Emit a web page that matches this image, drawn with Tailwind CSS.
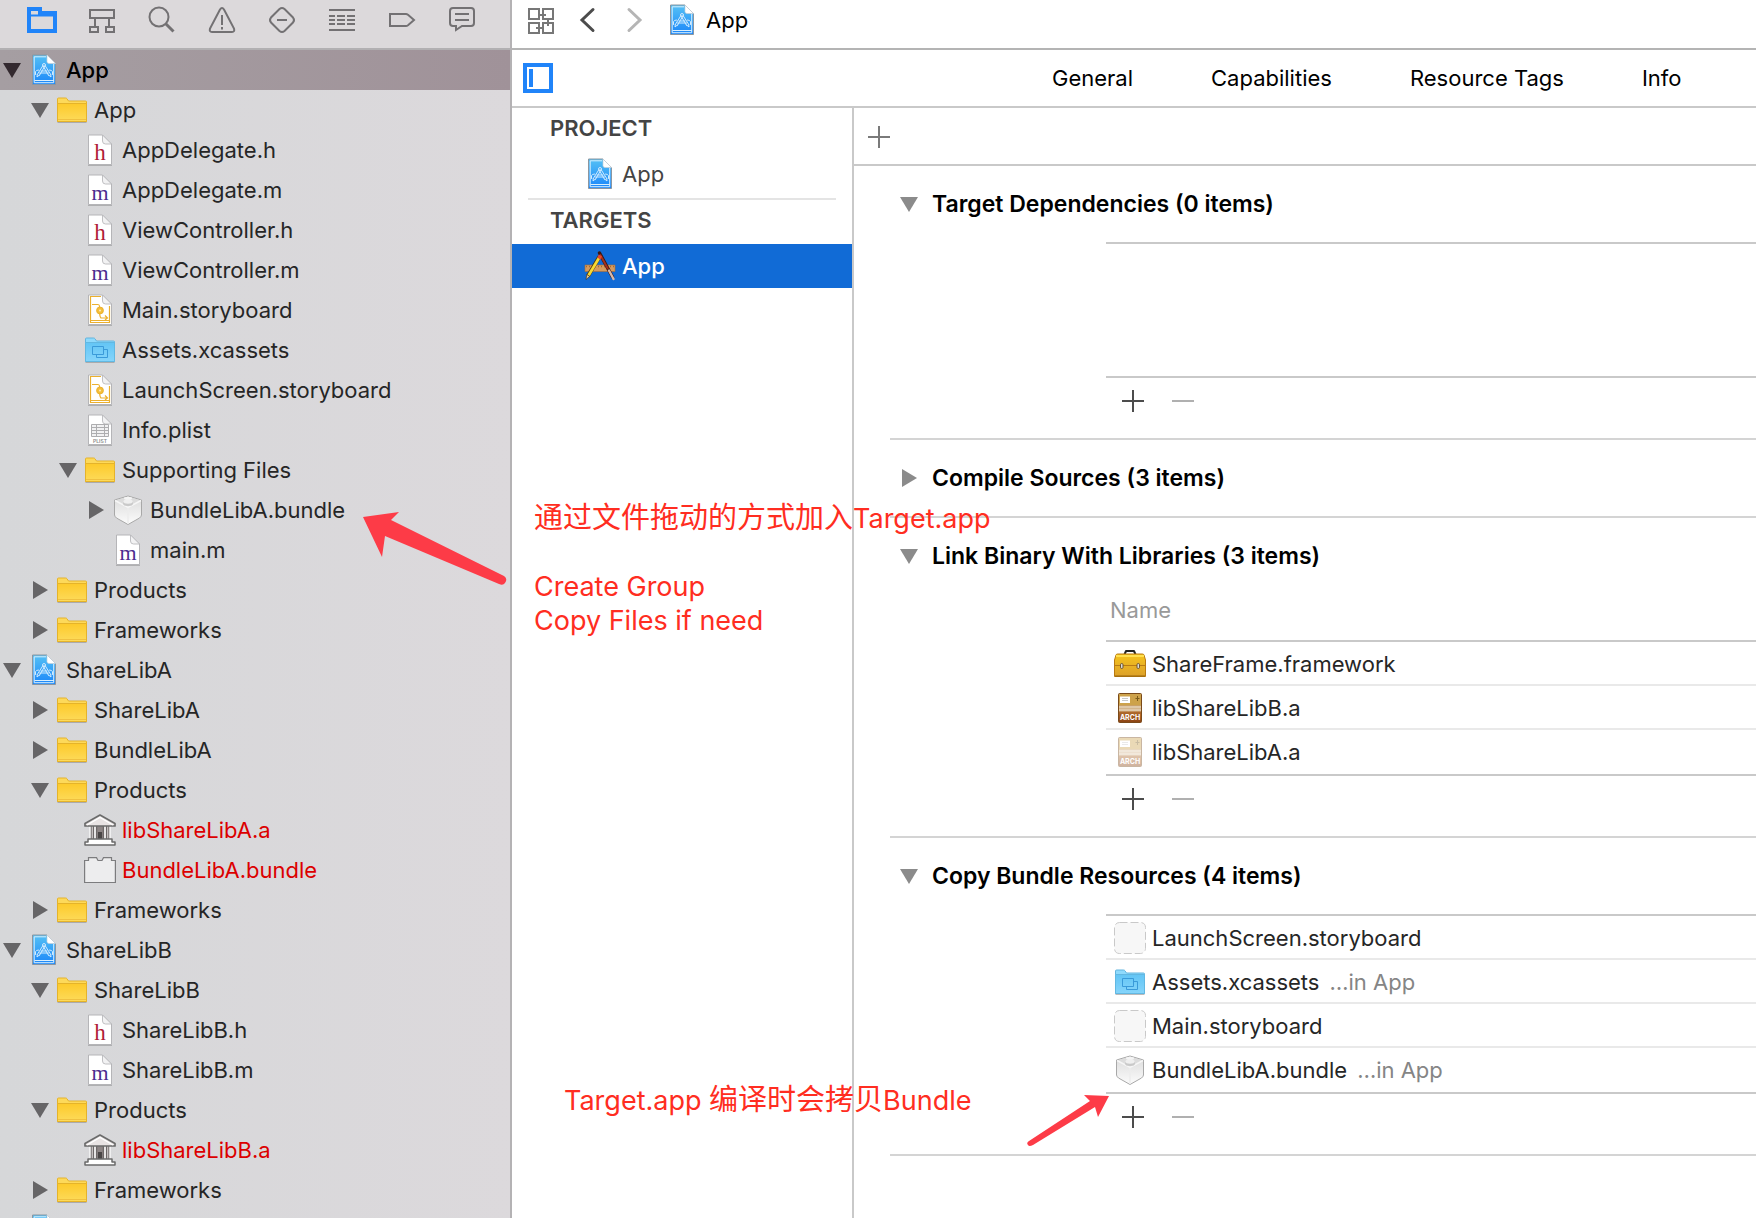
<!DOCTYPE html>
<html lang="zh-CN">
<head>
<meta charset="utf-8">
<meta name="viewport" content="width=device-width, initial-scale=1">
<title>App — Build Phases</title>
<script src="https://cdn.jsdelivr.net/npm/@tailwindcss/browser@4"></script>
</head>
<body class="relative flex h-screen overflow-hidden bg-white font-['Inter','Noto_Sans_CJK_SC',sans-serif] text-[22px] leading-[30px] text-[#262626]">

<svg class="absolute size-0" aria-hidden="true">
  <defs>
    <linearGradient id="gBlue" x1="0" y1="0" x2="0" y2="1"><stop offset="0" stop-color="#55c1f5"/><stop offset="1" stop-color="#1b86f9"/></linearGradient>
    <linearGradient id="gFolder" x1="0" y1="0" x2="0" y2="1"><stop offset="0" stop-color="#fdca2b"/><stop offset="1" stop-color="#fddb5b"/></linearGradient>
    <linearGradient id="gAsset" x1="0" y1="0" x2="0" y2="1"><stop offset="0" stop-color="#63c5f5"/><stop offset="1" stop-color="#86d5fb"/></linearGradient>
    <linearGradient id="gCube" x1="0" y1="0" x2="0" y2="1"><stop offset="0" stop-color="#dadada"/><stop offset="1" stop-color="#fcfcfc"/></linearGradient>
    <linearGradient id="gBox" x1="0" y1="0" x2="0" y2="1"><stop offset="0" stop-color="#f6c41c"/><stop offset="1" stop-color="#dca02a"/></linearGradient>
    <linearGradient id="gArch" x1="0" y1="0" x2="0" y2="1"><stop offset="0" stop-color="#c08a45"/><stop offset=".6" stop-color="#b36f30"/><stop offset="1" stop-color="#8a4212"/></linearGradient>
  </defs>

  <symbol id="down" viewBox="0 0 24 24"><path d="M3 5h18l-9 15z" fill="currentColor"/></symbol>
  <symbol id="right" viewBox="0 0 24 24"><path d="M5 3v18l15-9z" fill="currentColor"/></symbol>
  <symbol id="plus" viewBox="0 0 22 22"><path d="M0 11h22M11 0v22" stroke="currentColor" stroke-width="2" fill="none"/></symbol>
  <symbol id="minus" viewBox="0 0 22 22"><path d="M0 11h22" stroke="currentColor" stroke-width="2" fill="none"/></symbol>

  <symbol id="project" viewBox="0 0 32 32">
    <path d="M4.500 1h14.500l8.500 8.500v21H4.500z" fill="url(#gBlue)" stroke="#8b96a0" stroke-width="1"/>
    <path d="M18 2.800H6.200v25.900h19.500V10" fill="none" stroke="#d9effd" stroke-width="1"/>
    <path d="M6.500 26.500h19.500" stroke="#d9effd" stroke-width="1"/>
    <path d="M19 1l8.500 8.500H21q-2 0-2-2z" fill="#fff" stroke="#c6d0d8" stroke-width=".7"/>
    <path d="M15 11.500L9.300 20.500M16.600 12.500l-5.200 9M9.300 20.500L9 23l2.400-2M17 11.500l5.700 9M15.400 12.500l5.200 9M22.700 20.500L23 23l-2.400-2M13 17h6M11.500 19h9M7.500 20.500v-3q1-1.500 3-1.500M24.500 20.500v-3q-1-1.500-3-1.500" fill="none" stroke="#cfeaff" stroke-width="1" stroke-linecap="round"/>
    <circle cx="16" cy="11" r="1.500" fill="none" stroke="#cfeaff"/>
  </symbol>
  <symbol id="folder" viewBox="0 0 32 32">
    <path d="M1.500 28.500h29" stroke="#8d8d8d" stroke-opacity=".6"/>
    <path d="M1.500 27.500V5q0-1 1-1h7q1 0 1.500.8L12.500 7h17q1 0 1 1v19.500z" fill="#fdd95a" stroke="#e5b32a"/>
    <path d="M1.500 9.500h29v18h-29z" fill="url(#gFolder)" stroke="#e5b32a"/>
    <path d="M2 25.500h28" stroke="#f0c040"/>
  </symbol>
  <symbol id="assets" viewBox="0 0 32 32">
    <path d="M1.500 28.500h29" stroke="#8d8d8d" stroke-opacity=".6"/>
    <path d="M1.500 27.500V5q0-1 1-1h7q1 0 1.500.8L12.500 7h17q1 0 1 1v19.500z" fill="#8fdafc" stroke="#62b4de"/>
    <path d="M1.500 8.500h29v19h-29z" fill="url(#gAsset)" stroke="#62b8e2"/>
    <path d="M8.500 12.500h11v8h-11zM19.500 15.500h4v8h-11v-3" fill="none" stroke="#3a9ad9"/>
  </symbol>
  <symbol id="page" viewBox="0 0 32 32">
    <path d="M4 31.200h24" stroke="#777" stroke-opacity=".6"/>
    <path d="M4.500 1h14l9 9v20.500h-23z" fill="#fff" stroke="#b5b5b8"/>
    <path d="M18.500 1l9 9h-6q-3 0-3-3z" fill="#f2f2f3" stroke="#b9b9bc" stroke-width=".9"/>
  </symbol>
  <symbol id="story" viewBox="0 0 32 32"><use href="#page"/>
    <path d="M17 2.500H6.500v26h19V12M6.500 26.500h19" fill="none" stroke="#ebb02f" stroke-width="1.200"/>
    <path d="M8 10.500h6q1.500 0 1.500 2v4q0 6 1.500 7.500h6M21 21.500l2.500 2.500-2.500 2" fill="none" stroke="#ebb02f" stroke-width="1.200"/>
    <circle cx="16" cy="16.500" r="3.400" fill="#f5bf38" stroke="#ebb02f"/><circle cx="16" cy="16.500" r="1" fill="#fdebc0"/>
  </symbol>
  <symbol id="cube" viewBox="0 0 32 32">
    <path d="M16 2L2.500 6v15q.5 2 2 3L16 30.500 27.500 24q1.500-1 2-3V6z" fill="url(#gCube)" stroke="#a8a8a8"/>
    <path d="M3 6.500L16 2.500l13 4-13 7z" fill="#dcdcdc"/>
    <path d="M3 6.500l13 7 13-7" fill="none" stroke="#f6f6f6" stroke-width="1.500"/>
    <path d="M16 14v16" stroke="#ececec" stroke-width="1.500"/>
    <ellipse cx="16" cy="9.500" rx="5" ry="2.500" fill="#c9c9c9"/><ellipse cx="16" cy="7.500" rx="4.500" ry="2.200" fill="#efefef"/>
    <ellipse cx="16" cy="4.200" rx="4" ry="1.500" fill="#f4f4f4"/>
  </symbol>
  <symbol id="lib" viewBox="0 0 32 32">
    <path d="M6 12h20v13H6z" fill="#d9d3d3"/>
    <path d="M12 12h8v13h-8z" fill="#8d8585"/><path d="M14 18h4v7h-4z" fill="#4a4646"/>
    <path d="M7 12v13M9.500 12v13M12.500 12v13M19.500 12v13M22.500 12v13M25 12v13" stroke="#6d6868" stroke-width="1.400"/>
    <path d="M11 12v13M21 12v13M6 12v13M26 12v13" stroke="#fff" stroke-width="1.200"/>
    <path d="M16 1L1 9.500V12h30V9.500z" fill="#e8e3e3" stroke="#6b6b6b" stroke-width="1.700" stroke-linejoin="round"/>
    <path d="M3 11L16 3.500 29 11" fill="none" stroke="#fff" stroke-width="1.200"/>
    <path d="M4 25h24v3h3v3H1v-3h3z" fill="#fff" stroke="#6b6b6b" stroke-width="1.500" stroke-linejoin="round"/>
  </symbol>
  <symbol id="brick" viewBox="0 0 32 32">
    <path d="M.600 28.500v-22H4.500V3.600h8l1.500 2.900h4l1.500-2.900h8v2.900h3.900v22z" fill="#ededee" stroke="#7c7c7e" stroke-width="1.200"/>
  </symbol>
  <symbol id="toolbox" viewBox="0 0 32 32">
    <path d="M10.500 6.500l1.500-3.500h8l1.500 3.500" fill="none" stroke="#222" stroke-width="2" stroke-linejoin="round"/>
    <path d="M.5 28.500V12l1.500-5q.3-1 1.500-1h25q1.200 0 1.500 1l1.500 5v16.500z" fill="url(#gBox)" stroke="#b87a10"/>
    <path d="M2 8h28" stroke="#ffe04f" stroke-width="2"/><path d="M.5 17.500h31" stroke="#b87a14"/><path d="M1 28h30" stroke="#96650c"/>
    <rect x="6.500" y="15.500" width="2.500" height="5" rx="1.200" fill="#ddd" stroke="#6b5430"/><rect x="23" y="15.500" width="2.500" height="5" rx="1.200" fill="#ddd" stroke="#6b5430"/>
  </symbol>
  <symbol id="box" viewBox="0 0 32 32">
    <rect x="4.500" y="1.500" width="23" height="29" rx="1" fill="url(#gArch)" stroke="#7a4a1a"/>
    <path d="M5 2h22v11.500H5z" fill="#cda24b"/><path d="M5 13.500h22v6H5z" fill="#d3b48c"/><path d="M5 15h22M5 18h22" stroke="#eadbc4"/>
    <path d="M6 4.500h10v6.500H6z" fill="#fff"/><path d="M8 6.500h6M8 8.500h6" stroke="#c9c9c9"/><path d="M23.500 4v5M21.500 6.500h4" stroke="#7a5a1a"/>
  </symbol>
  <symbol id="blank" viewBox="0 0 32 32"><rect x=".5" y=".5" width="31" height="31" rx="5" fill="#f7f7f7" stroke="#c9c9c9" stroke-dasharray="8 3"/></symbol>
  <symbol id="appicon" viewBox="0 0 32 32">
    <path d="M1 15h30v6.500H1z" fill="#d69a5c" stroke="#a86d35" stroke-width=".6"/><path d="M2 16.500h28" stroke="#a06a38" stroke-width="1.500" stroke-dasharray="1 2"/>
    <path d="M15.500 3l13 24" stroke="#3b1512" stroke-width="3.400" stroke-linecap="round"/><path d="M16 4.500l8 14.500" stroke="#a3301c" stroke-width="2"/><path d="M25 20.500l4.500 8.500" stroke="#d9b9a8" stroke-width="2.400" stroke-linecap="round"/>
    <path d="M15.500 6.500L4 26" stroke="#4b3a10" stroke-width="4"/><path d="M15 8L4.500 25.500" stroke="#f8d932" stroke-width="2.800"/><path d="M16.500 5.500l-1.700 3" stroke="#e8452c" stroke-width="3.600"/>
    <path d="M2.800 24.500l3 1.800L2 29.500z" fill="#e8c89a" stroke="#3a2a12" stroke-width=".6"/>
  </symbol>
</svg>

<aside class="flex w-[512px] shrink-0 flex-col border-r-2 border-[#b4b2b4] bg-linear-to-r from-[#d6d7d9] to-[#dcd9dc]">
  <nav class="flex h-[50px] shrink-0 items-start border-b-2 border-[#b2b0b2] bg-[#dcd9db] px-3 pt-1 text-[#737173]" aria-label="Navigators">
    <button class="flex w-15 justify-center text-[#2084f9]" aria-label="Project"><svg class="size-8" viewBox="0 0 32 32" fill="none" stroke="currentColor"><path d="M3 27V5h11v4h15v18z" stroke-width="4"/><path d="M4 11.500h25" stroke-width="2"/></svg></button>
    <button class="flex w-15 justify-center" aria-label="Hierarchy"><svg class="size-8" viewBox="0 0 32 32" fill="none" stroke="currentColor" stroke-width="2"><path d="M4 6h24v8H4zM4 23h8v5H4zM20 23h8v5h-8zM9 14v9M23 14v9"/></svg></button>
    <button class="flex w-15 justify-center" aria-label="Find"><svg class="size-8" viewBox="0 0 32 32" fill="none" stroke="currentColor" stroke-width="2"><circle cx="13" cy="13" r="9.500"/><path d="M19.500 19.500l8 8" stroke-width="3"/></svg></button>
    <button class="flex w-15 justify-center" aria-label="Issues"><svg class="size-8" viewBox="0 0 32 32" fill="none" stroke="currentColor" stroke-width="2"><path d="M14 5.500q2-3 4 0l10 19q1 3.500-2 3.500H6q-3 0-2-3.500zM16 11v10M16 23v2.500"/></svg></button>
    <button class="flex w-15 justify-center" aria-label="Tests"><svg class="size-8" viewBox="0 0 32 32" fill="none" stroke="currentColor" stroke-width="2"><path d="M13.500 5q2.500-2 5 0l8.500 8.500q2 2.500 0 5L18.500 27q-2.500 2-5 0L5 18.500q-2-2.500 0-5zM11 16h10"/></svg></button>
    <button class="flex w-15 justify-center" aria-label="Debug"><svg class="size-8" viewBox="0 0 32 32" fill="none" stroke="currentColor" stroke-width="2"><path d="M3 6h26M3 26h26"/><path d="M3 12h6m2 0h8m2 0h8M3 16h6m2 0h8m2 0h8M3 20h6m2 0h8m2 0h8"/></svg></button>
    <button class="flex w-15 justify-center" aria-label="Breakpoints"><svg class="size-8" viewBox="0 0 32 32" fill="none" stroke="currentColor" stroke-width="2"><path d="M4 10h16q1 0 2 .7L28 16l-6 5.300q-1 .7-2 .7H4z"/></svg></button>
    <button class="flex w-15 justify-center" aria-label="Reports"><svg class="size-8" viewBox="0 0 32 32" fill="none" stroke="currentColor" stroke-width="2"><path d="M7 4h18q3 0 3 3v12q0 3-3 3H16l-6 4v-4H7q-3 0-3-3V7q0-3 3-3zM9 10h14M9 16h14"/></svg></button>
  </nav>
  <ul id="tree" class="min-h-0 flex-1 overflow-hidden"></ul>
</aside>

<main class="flex min-w-0 flex-1 flex-col">
  <header class="flex h-[50px] shrink-0 items-start border-b-2 border-[#b4b4b4] pt-1 pl-[13px]">
    <button aria-label="Related items" class="text-[#777]"><svg class="size-8" viewBox="0 0 32 32" fill="none" stroke="currentColor" stroke-width="2"><path d="M4 5h10v10H4zM18 5h10v10H18zM4 19h10v10H4zM18 19h10v10H18zM14 11h7M23 15v7M18 24h-7"/></svg></button>
    <button aria-label="Back" class="ml-[15px] text-[#4c4c4c]"><svg class="size-8" viewBox="0 0 32 32" fill="none" stroke="currentColor" stroke-width="3" stroke-linecap="round"><path d="M21 5.500L10 16l11 10.500"/></svg></button>
    <button aria-label="Forward" class="ml-[13px] text-[#b5b5b5]"><svg class="size-8" viewBox="0 0 32 32" fill="none" stroke="currentColor" stroke-width="3" stroke-linecap="round"><path d="M12 5.500L23 16 12 26.500"/></svg></button>
    <a href="#" class="ml-[17px] flex items-center gap-2 text-black"><svg class="size-8"><use href="#project"/></svg>App</a>
  </header>

  <div class="flex h-[58px] shrink-0 items-center border-b-2 border-[#c9c9c9] pl-[11px]">
    <button aria-label="Toggle targets list" class="text-[#2084f9]"><svg class="size-[30px]" viewBox="0 0 30 30"><path d="M2 2h26v26H2z" fill="none" stroke="currentColor" stroke-width="4"/><path d="M6 6h4v18H6z" fill="currentColor"/></svg></button>
    <nav class="flex gap-[78px] pl-[499px] text-black" aria-label="Editor tabs">
      <button>General</button>
      <button>Capabilities</button>
      <button class="whitespace-nowrap">Resource Tags</button>
      <button>Info</button>
    </nav>
  </div>

  <div class="flex min-h-0 flex-1">
    <section class="flex w-[342px] shrink-0 flex-col border-r-2 border-[#c9c9c9] text-[#444]">
      <h2 class="flex h-[42px] items-center pb-0.5 pl-[38px] font-semibold">PROJECT</h2>
      <a href="#" class="mx-4 flex h-[50px] items-center gap-1.5 border-b-2 border-[#e4e4e4] pl-14"><svg class="size-8"><use href="#project"/></svg>App</a>
      <h2 class="flex h-11 items-center pb-1 pl-[38px] font-semibold">TARGETS</h2>
      <a href="#" class="flex h-11 items-center gap-1.5 bg-[#116bd6] pl-[72px] font-medium text-white"><svg class="size-8"><use href="#appicon"/></svg>App</a>
    </section>

    <div class="min-w-0 flex-1 overflow-hidden">
      <div class="flex h-[58px] items-center border-b-2 border-[#c9c9c9] pt-0.5 pl-[14px] text-[#7a7a7a]">
        <button aria-label="Add build phase"><svg class="size-[22px]"><use href="#plus"/></svg></button>
      </div>
      <div id="phases" class="pl-9"></div>
    </div>
  </div>
</main>

<!-- Callouts drawn over the window -->
<p class="absolute top-[501px] left-[534px] text-[27px] leading-[34px] whitespace-nowrap text-[#ff2d21]"><span class="text-[29px]">通过文件拖动的方式加入</span>Target.app<br><br>Create Group<br>Copy Files if need</p>
<p class="absolute top-[1083px] left-[564px] text-[27px] leading-[34px] whitespace-nowrap text-[#ff2d21]">Target.app <span class="text-[29px]">编译时会拷贝</span>Bundle</p>
<svg class="absolute top-[510px] left-[360px] h-[76px] w-[150px]" viewBox="0 0 150 76"><path d="M3 7l36-5-8 8 113 56q4 3 1 7-2 3-6 1L25 26l-3 21z" fill="#fd3b47"/></svg>
<svg class="absolute top-[1094px] left-[1024px] h-[54px] w-[88px]" viewBox="0 0 88 54"><path d="M85 2L60 1l6 6L5 47q-3 2-1 4 1 2 5 0l62-38 3 10z" fill="#fd3b47"/></svg>

<script>
  // Icons that carry lettering are drawn on top of a shared base shape
  const lettered = {
    h: '<use href="#page"/><text x="16" y="26" text-anchor="middle" font-family="Liberation Serif, serif" font-size="23" fill="#b01c36">h</text>',
    m: '<use href="#page"/><text x="16" y="26" text-anchor="middle" font-family="Liberation Serif, serif" font-size="22" fill="#4c2c8f">m</text>',
    plist: '<use href="#page"/><path d="M7.500 10.500h17v12h-17zM7.500 13.500h17M7.500 16.500h17M7.500 19.500h17M12.500 10.500v12M20.500 10.500v12" fill="#f1f1f2" stroke="#adadaf"/><text x="16" y="29" text-anchor="middle" font-family="Inter, sans-serif" font-weight="600" font-size="5" fill="#8b8b8b">PLIST</text>',
    arch: '<use href="#box"/><text x="16" y="28" text-anchor="middle" font-family="Inter, sans-serif" font-weight="700" font-size="7" fill="#fff">ARCH</text>',
  };
  const icon = (id) => `<svg class="size-8 shrink-0" viewBox="0 0 32 32" aria-hidden="true">${lettered[id] || `<use href="#${id}"/>`}</svg>`;
  const toggle = (state, cls) => `<button class="${cls}" aria-label="Toggle"><svg class="size-6"><use href="#${state}"/></svg></button>`;

  // depth, disclosure state, icon, label, style
  const tree = [
    [0, 'down', 'project', 'App', 'selected'],
    [1, 'down', 'folder', 'App'],
    [2, '', 'h', 'AppDelegate.h'], [2, '', 'm', 'AppDelegate.m'],
    [2, '', 'h', 'ViewController.h'], [2, '', 'm', 'ViewController.m'],
    [2, '', 'story', 'Main.storyboard'], [2, '', 'assets', 'Assets.xcassets'],
    [2, '', 'story', 'LaunchScreen.storyboard'], [2, '', 'plist', 'Info.plist'],
    [2, 'down', 'folder', 'Supporting Files'],
    [3, 'right', 'cube', 'BundleLibA.bundle'], [3, '', 'm', 'main.m'],
    [1, 'right', 'folder', 'Products'], [1, 'right', 'folder', 'Frameworks'],
    [0, 'down', 'project', 'ShareLibA'],
    [1, 'right', 'folder', 'ShareLibA'], [1, 'right', 'folder', 'BundleLibA'],
    [1, 'down', 'folder', 'Products'],
    [2, '', 'lib', 'libShareLibA.a', 'missing'], [2, '', 'brick', 'BundleLibA.bundle', 'missing'],
    [1, 'right', 'folder', 'Frameworks'],
    [0, 'down', 'project', 'ShareLibB'],
    [1, 'down', 'folder', 'ShareLibB'],
    [2, '', 'h', 'ShareLibB.h'], [2, '', 'm', 'ShareLibB.m'],
    [1, 'down', 'folder', 'Products'],
    [2, '', 'lib', 'libShareLibB.a', 'missing'],
    [1, 'right', 'folder', 'Frameworks'],
    [0, '', 'project', ''],
  ];
  const indent = ['pl-0', 'pl-7', 'pl-14', 'pl-21'];
  const look = { selected: 'bg-linear-to-r from-[#a59ea2] to-[#a09299] font-medium text-black', missing: 'text-[#dc0000]' };
  document.getElementById('tree').innerHTML = tree.map(([d, state, ic, label, style]) => `
    <li class="flex h-10 items-center ${indent[d]} ${look[style] || ''}">
      <span class="mr-1 flex w-6 shrink-0">${state ? toggle(state, style === 'selected' ? 'text-[#33292f]' : 'text-[#666567]') : ''}</span>
      ${icon(ic)}<span class="ml-1.5 whitespace-nowrap">${label}</span>
    </li>`).join('');

  const phases = [
    { title: 'Target Dependencies (0 items)', open: true, rows: [] },
    { title: 'Compile Sources (3 items)', open: false },
    { title: 'Link Binary With Libraries (3 items)', open: true, head: 'Name',
      rows: [['toolbox', 'ShareFrame.framework'], ['arch', 'libShareLibB.a'], ['arch', 'libShareLibA.a', '', 'opacity-40']] },
    { title: 'Copy Bundle Resources (4 items)', open: true,
      rows: [['blank', 'LaunchScreen.storyboard'], ['assets', 'Assets.xcassets', '…in App'], ['blank', 'Main.storyboard'], ['cube', 'BundleLibA.bundle', '…in App']] },
  ];
  const row = ([ic, name, where, fade], i, all) => `
    <tr><td class="border-b-2 pl-2 ${i < all.length - 1 ? 'h-11 border-[#e9e9e9] pt-0.5' : 'h-[46px] border-[#c9c9c9]'}"><div class="flex items-center">
      <span class="${fade || ''}">${icon(ic)}</span><span class="ml-1.5">${name}</span>${where ? `<span class="ml-2.5 text-[#858585]">${where}</span>` : ''}
    </div></td></tr>`;
  document.getElementById('phases').innerHTML = phases.map((p) => `
    <section class="border-b-2 border-[#d4d4d4]">
      <h3 class="flex h-[76px] items-center pl-[7px] text-[23px] font-semibold text-black">${toggle(p.open ? 'down' : 'right', 'mr-[11px] text-[#8b8b8b]')}${p.title}</h3>
      ${p.open ? `<div class="pl-[216px]">
        <table class="w-full border-separate border-spacing-0 text-left">
          ${p.head ? `<thead><tr><th class="h-12 border-b-2 border-[#c9c9c9] pt-px pl-1 align-top font-normal text-[#999]">${p.head}</th></tr></thead>` : ''}
          <tbody>${p.rows.length ? p.rows.map(row).join('') : '<tr><td class="h-[134px] border-b-2 border-[#c9c9c9]"></td></tr>'}</tbody>
        </table>
        <div class="flex h-[60px] items-start gap-7 pt-3 pl-4">
          <button aria-label="Add" class="text-[#4c4c4c]"><svg class="size-[22px]"><use href="#plus"/></svg></button>
          <button aria-label="Remove" class="text-[#b0b0b0]"><svg class="size-[22px]"><use href="#minus"/></svg></button>
        </div>
      </div>` : ''}
    </section>`).join('');
  // Tables without a header row are closed off by a rule of their own
  document.querySelectorAll('#phases table').forEach((t) => { if (!t.tHead) t.classList.add('border-t-2', 'border-[#c9c9c9]'); });
</script>
</body>
</html>
